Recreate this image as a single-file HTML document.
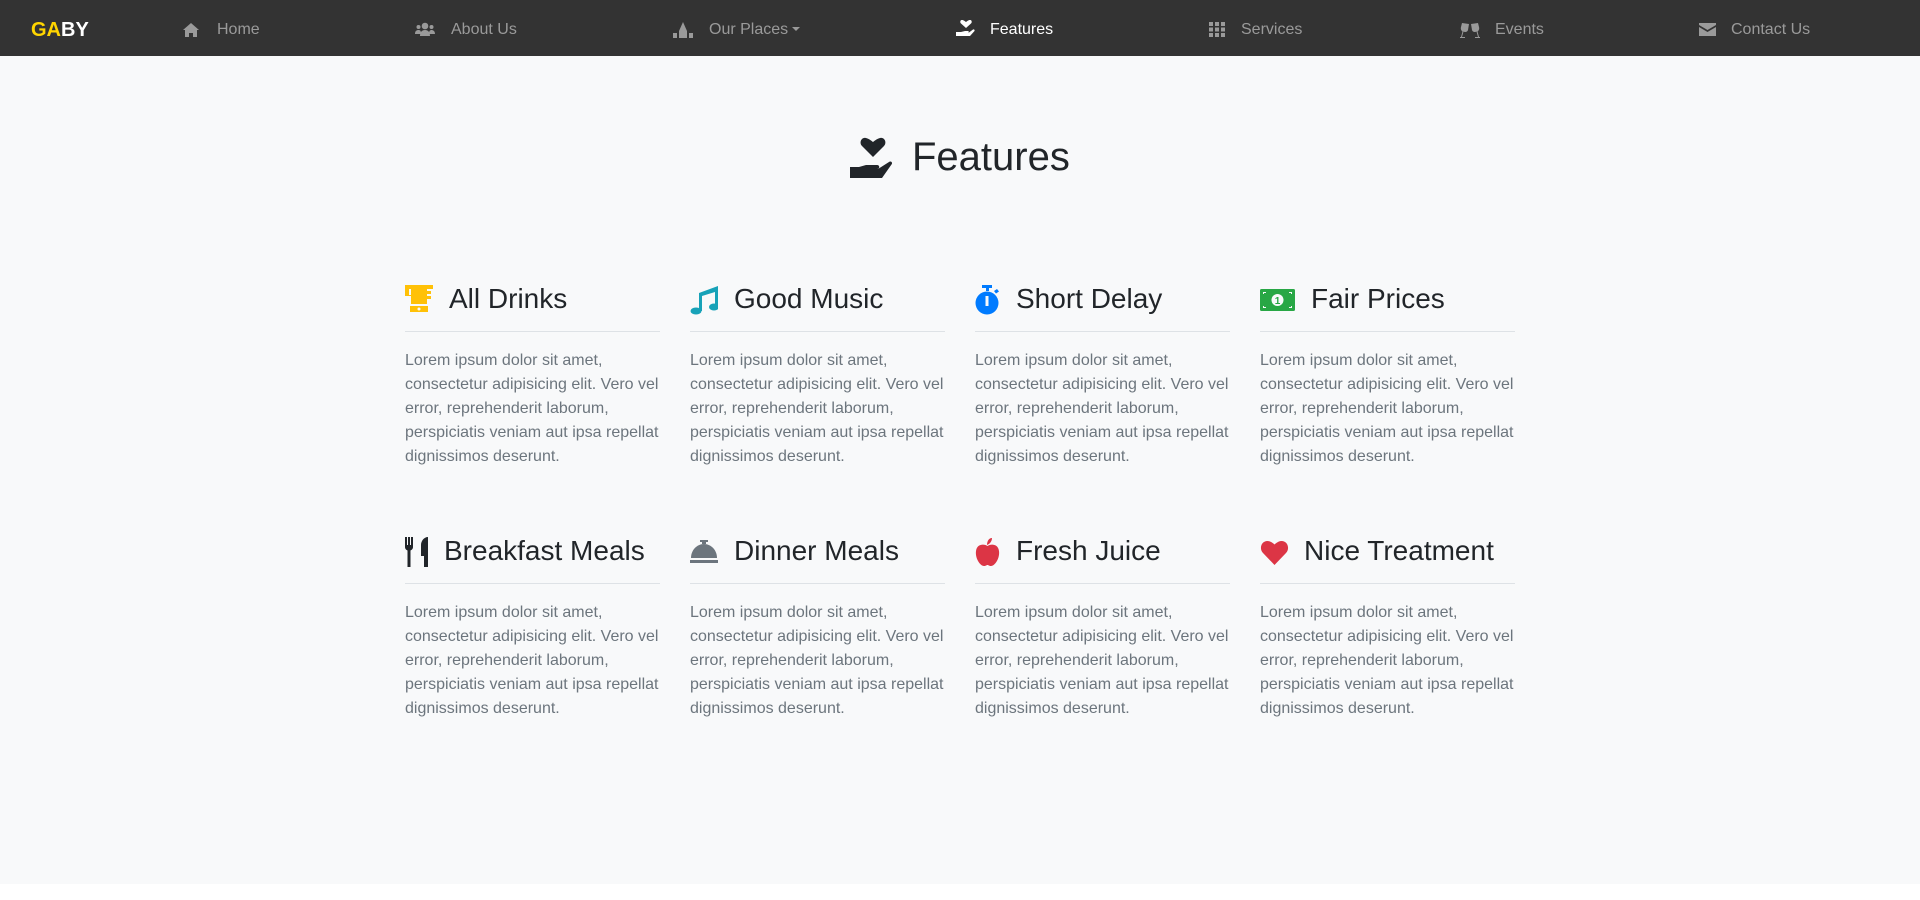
<!DOCTYPE html>
<html><head><meta charset="utf-8"><style>
*{margin:0;padding:0;box-sizing:border-box}
body{width:1920px;height:900px;background:#fff;font-family:"Liberation Sans",sans-serif;position:relative;overflow:hidden}
.page{position:absolute;left:0;top:0;width:1920px;height:884px;background:#f8f9fa}
nav{position:absolute;left:0;top:0;width:1920px;height:56px;background:#333}
.brand{position:absolute;left:31px;top:18px;font-size:20px;font-weight:bold;color:#fff;line-height:24px}
.brand span{color:#ffd500}
.ni{position:absolute;top:19px;font-size:16px;line-height:22px;color:#9a9a9a;white-space:nowrap}
.ni.a{color:#fff}
.ni svg{position:absolute;top:3px;fill:currentColor}
h1{position:absolute;left:912px;top:133px;font-size:40px;font-weight:400;color:#212529;line-height:48px}
.f{position:absolute;width:255px}
.f h3{position:relative;font-size:28px;font-weight:400;color:#212529;line-height:34px;height:34px;white-space:nowrap}
.f h3 svg{position:absolute;left:0;top:3px}
.f hr{position:absolute;top:49px;left:0;width:255px;border:0;border-top:1px solid #dee2e6}
.f p{position:absolute;top:67px;left:0;width:255px;font-size:16px;line-height:24px;color:#6c757d}
</style></head><body>
<div class="page"></div>
<nav>
<div class="brand"><span>GA</span>BY</div>
<div class="ni" style="left:182px"><svg width="18" height="15" viewBox="0 0 18 15" style="left:0"><path d="M9 1L1 8h2v7h4v-4h4v4h4V8h2z"/></svg><span style="margin-left:35px">Home</span></div>
<div class="ni" style="left:415px"><svg width="20" height="15" viewBox="0 0 20 15" style="left:0"><circle cx="10" cy="4" r="3.3"/><circle cx="3.5" cy="5" r="2"/><circle cx="16.5" cy="5" r="2"/><path d="M5 14c0-4 2-6 5-6s5 2 5 6zM0 12c0-3 1.5-4 3.5-4S6 9 6 12zM14 12c0-3 1-4 2.5-4S20 9 20 12z"/></svg><span style="margin-left:36px">About Us</span></div>
<div class="ni" style="left:672px"><svg width="22" height="16" viewBox="0 0 22 16" style="left:0"><path d="M11 0l-4 9v7h8V9zM1 11h4v5H1zM17 11h4v5h-4z"/></svg><span style="margin-left:37px">Our Places</span><svg width="8" height="5" viewBox="0 0 8 5" style="left:120px;top:8px"><path d="M0 0h8L4 4z"/></svg></div>
<div class="ni a" style="left:956px"><svg width="20" height="17" viewBox="0 0 20 17" style="left:0;top:1px"><path d="M9 9L4 4.5C2.5 3 3.5 0.5 5.5 1 7 1.3 9 3 9 3s2-1.7 3.5-2c2-.5 3 2 1.5 3.5z" transform="translate(1,-1)"/><path d="M0 12h5l4-1h3c1 0 1 1.5 0 1.5H9h4l4-3c1-.5 2 .5 1.5 1.5L14 16H0z"/></svg><span style="margin-left:34px">Features</span></div>
<div class="ni" style="left:1209px"><svg width="16" height="15" viewBox="0 0 16 15" style="left:0"><path d="M0 0h4v4H0zM6 0h4v4H6zM12 0h4v4h-4zM0 5.5h4v4H0zM6 5.5h4v4H6zM12 5.5h4v4h-4zM0 11h4v4H0zM6 11h4v4H6zM12 11h4v4h-4z"/></svg><span style="margin-left:32px">Services</span></div>
<div class="ni" style="left:1460px"><svg width="20" height="16" viewBox="0 0 20 16" style="left:0"><path d="M2 1l7 1-1 6c-.5 2-3 2.5-4.5 1.5L2 15h3v1H0v-1h1l1.5-5.5C1 8.5 0.5 6.5 1 5zM18 1l-7 1 1 6c.5 2 3 2.5 4.5 1.5L18 15h-3v1h5v-1h-1l-1.5-5.5C19 8.5 19.5 6.5 19 5z"/></svg><span style="margin-left:35px">Events</span></div>
<div class="ni" style="left:1699px"><svg width="17" height="14" viewBox="0 0 17 14" style="left:0;top:4px"><path d="M0 0h17v2L8.5 7 0 2zM0 4l8.5 5L17 4v9H0z"/></svg><span style="margin-left:32px">Contact Us</span></div>
</nav>

<svg width="46" height="44" viewBox="0 0 46 44" style="position:absolute;left:850px;top:135px;fill:#212529"><path d="M23 22L12 11C9 8 11 2 16 3c3 .5 7 4 7 4s4-3.5 7-4c5-1 7 5 4 8z"/><path d="M0 32h9l7-2h11c3 0 3 4 0 4h-9 10l11-7c2-1.5 4 .5 2.5 2.5L32 43H0z"/></svg>
<h1>Features</h1>

<div class="f" style="left:405px;top:282px"><h3><svg width="28" height="30" viewBox="0 0 28 30" fill="#ffc107"><path d="M0 0h28v4h-6v2h4v3h-4v2h4v3h-4v5h-16v-8H0zM4 4v6h2V4z"/><path d="M5 21h18v6H5z"/><circle cx="14" cy="24" r="1.5" fill="#f8f9fa"/></svg><span style="margin-left:44px">All Drinks</span></h3><hr><p>Lorem ipsum dolor sit amet, consectetur adipisicing elit. Vero vel error, reprehenderit laborum, perspiciatis veniam aut ipsa repellat dignissimos deserunt.</p></div>
<div class="f" style="left:690px;top:282px"><h3><svg width="28" height="30" viewBox="0 0 28 30" fill="#17a2b8"><path d="M9 8L28 1v22h-3V7L12 11v15h-3z"/><ellipse cx="6" cy="26" rx="5.5" ry="3.5"/><ellipse cx="24" cy="22" rx="5" ry="3.5"/></svg><span style="margin-left:44px">Good Music</span></h3><hr><p>Lorem ipsum dolor sit amet, consectetur adipisicing elit. Vero vel error, reprehenderit laborum, perspiciatis veniam aut ipsa repellat dignissimos deserunt.</p></div>
<div class="f" style="left:975px;top:282px"><h3><svg width="25" height="30" viewBox="0 0 25 30" fill="#007bff"><path d="M7 0h10v3h-3v3h-3V3H7z"/><circle cx="12" cy="18" r="11.5"/><path d="M19 6l3-2 2 2.5-3 2z"/><rect x="10.5" y="11" width="3" height="10" fill="#f8f9fa"/></svg><span style="margin-left:41px">Short Delay</span></h3><hr><p>Lorem ipsum dolor sit amet, consectetur adipisicing elit. Vero vel error, reprehenderit laborum, perspiciatis veniam aut ipsa repellat dignissimos deserunt.</p></div>
<div class="f" style="left:1260px;top:282px"><h3><svg width="35" height="30" viewBox="0 0 35 30" fill="#28a745"><rect x="0" y="4" width="35" height="22" rx="1.5"/><circle cx="17.5" cy="15" r="6" fill="#f8f9fa"/><text x="17.5" y="19" font-size="10" font-family="Liberation Sans" font-weight="bold" text-anchor="middle" fill="#28a745">1</text><path d="M3 7h3v1H4v1H3zM32 7h-3v1h2v1h1zM3 23h3v-1H4v-1H3zM32 23h-3v-1h2v-1h1z" fill="#f8f9fa"/></svg><span style="margin-left:51px">Fair Prices</span></h3><hr><p>Lorem ipsum dolor sit amet, consectetur adipisicing elit. Vero vel error, reprehenderit laborum, perspiciatis veniam aut ipsa repellat dignissimos deserunt.</p></div>

<div class="f" style="left:405px;top:534px"><h3><svg width="24" height="30" viewBox="0 0 24 30" fill="#212529"><path d="M0 0h2v8h1V0h2v8h1V0h2v10c0 2-1.5 3-2.5 3.5V30h-3V13.5C1.5 13 0 12 0 10z"/><path d="M23 0v30h-4V19h-3V8c0-4 3-8 7-8z"/></svg><span style="margin-left:39px">Breakfast Meals</span></h3><hr><p>Lorem ipsum dolor sit amet, consectetur adipisicing elit. Vero vel error, reprehenderit laborum, perspiciatis veniam aut ipsa repellat dignissimos deserunt.</p></div>
<div class="f" style="left:690px;top:534px"><h3><svg width="28" height="30" viewBox="0 0 28 30" fill="#6c757d"><path d="M10 3h8v2h-8z"/><path d="M12 5h4v2h-4z"/><path d="M1 21C1 13 7 7 14 7s13 6 13 14z"/><rect x="0" y="23" width="28" height="3"/></svg><span style="margin-left:44px">Dinner Meals</span></h3><hr><p>Lorem ipsum dolor sit amet, consectetur adipisicing elit. Vero vel error, reprehenderit laborum, perspiciatis veniam aut ipsa repellat dignissimos deserunt.</p></div>
<div class="f" style="left:975px;top:534px"><h3><svg width="25" height="30" viewBox="0 0 25 30" fill="#dc3545"><path d="M12.5 9C10 7 2 6 1 14c-1 7 4 15 8 15 2 0 2.5-1 3.5-1s1.5 1 3.5 1c4 0 9-8 8-15-1-8-9-7-11.5-5z"/><path d="M12 8c0-4 2-7 5-7 0 3-2 6-5 7z"/></svg><span style="margin-left:41px">Fresh Juice</span></h3><hr><p>Lorem ipsum dolor sit amet, consectetur adipisicing elit. Vero vel error, reprehenderit laborum, perspiciatis veniam aut ipsa repellat dignissimos deserunt.</p></div>
<div class="f" style="left:1260px;top:534px"><h3><svg width="29" height="30" viewBox="0 0 29 30" fill="#dc3545"><path d="M14.5 28L3 16C-1 12 1 4 7.5 4c3.5 0 7 3.5 7 3.5S18 4 21.5 4C28 4 30 12 26 16z"/></svg><span style="margin-left:44px">Nice Treatment</span></h3><hr><p>Lorem ipsum dolor sit amet, consectetur adipisicing elit. Vero vel error, reprehenderit laborum, perspiciatis veniam aut ipsa repellat dignissimos deserunt.</p></div>
</body></html>
